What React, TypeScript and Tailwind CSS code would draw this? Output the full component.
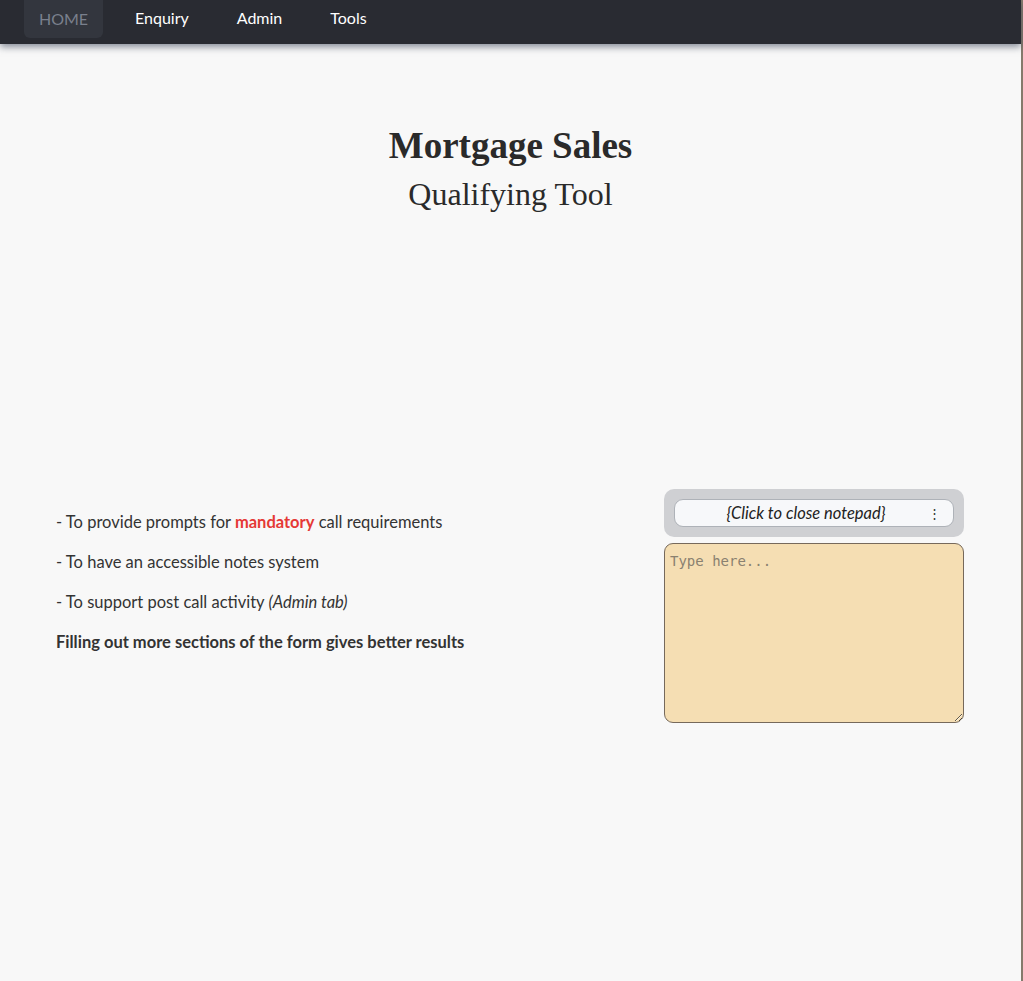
import { useState } from 'react'

const NAV_ITEMS = ['HOME', 'Enquiry', 'Admin', 'Tools']

export default function App() {
  const [open, setOpen] = useState(true)
  const [notes, setNotes] = useState('')

  return (
    <div className="min-h-[981px] w-full border-r-2 border-[#857a6c] bg-[#f8f8f8] font-['Lato','Noto_Sans',sans-serif] text-[#333]">
      <nav className="relative z-10 flex h-[44px] items-start bg-[#292b32] pl-[24px] shadow-[0_3px_7px_rgba(60,70,90,0.6)]">
        {NAV_ITEMS.map((item, i) =>
          i === 0 ? (
            <a
              key={item}
              className="flex h-[38px] w-[79px] items-center justify-center rounded-b-md bg-[#33363e] text-[16px] text-[#7a808d]"
            >
              {item}
            </a>
          ) : (
            <a
              key={item}
              className={`flex h-[36px] items-center text-[16px] text-white ${i === 1 ? 'ml-[32px]' : 'ml-[48px]'}`}
            >
              {item}
            </a>
          ),
        )}
      </nav>

      <header className="pt-[78px] text-center font-['Liberation_Serif',serif] text-[#2a2a2a]">
        <h1 className="text-[37px] font-bold leading-[48px]">Mortgage Sales</h1>
        <h2 className="text-[32px] leading-[48px]">Qualifying Tool</h2>
      </header>

      <main className="mt-[271px] flex items-start justify-between pl-[56px] pr-[57px]">
        <div className="mt-[24px] flex flex-col gap-[21px] text-[16.5px] leading-[19px] text-[#333]">
          <p>
            - To provide prompts for <span className="font-bold text-[#e53935]">mandatory</span> call
            requirements
          </p>
          <p>- To have an accessible notes system</p>
          <p>
            - To support post call activity <i>(Admin tab)</i>
          </p>
          <p className="font-bold">Filling out more sections of the form gives better results</p>
        </div>

        <div className="flex w-[300px] flex-col gap-[6px]">
          <div className="rounded-[10px] bg-[#cfd0d3] px-[10px] py-[10px]">
            <button
              type="button"
              onClick={() => setOpen(!open)}
              className="relative flex h-[28px] w-full items-center rounded-[9px] border border-[#aeb2b8] bg-[#f7f8fa] pr-[16px] text-[16.5px] italic text-[#222]"
            >
              <span className="flex-1 text-center">
                {open ? '{Click to close notepad}' : '{Click to open notepad}'}
              </span>
              <span className="absolute right-[12px] top-[5px] text-[13px] not-italic leading-[16px] text-[#333]">⋮</span>
            </button>
          </div>
          {open && (
            <textarea
              value={notes}
              onChange={(e) => setNotes(e.target.value)}
              placeholder="Type here..."
              className="h-[180px] w-full rounded-[9px] border border-[#76695b] bg-[#f5deb3] px-[5px] py-[8px] font-['DejaVu_Sans_Mono',monospace] text-[14px] leading-[18px] text-[#333] placeholder:text-[#8a8170] focus:outline-none"
            />
          )}
        </div>
      </main>
    </div>
  )
}
